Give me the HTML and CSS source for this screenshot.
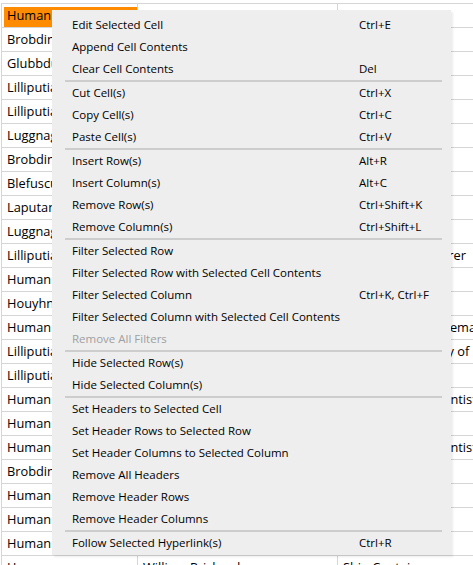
FILE: index.html
```html
<!DOCTYPE html>
<html lang="en">
<head>
<meta charset="utf-8">
<title>Grid context menu</title>
<link rel="stylesheet" href="styles.css">
</head>
<body>
<table class="grid">
<tr><td class="c1 sel">Human</td><td class="c2">Lemuel Gulliver</td><td class="c3">Ship's Surgeon</td></tr>
<tr><td>Brobdingnagian</td><td>Glumdalclitch</td><td>Nurse</td></tr>
<tr><td>Glubbdubdribian</td><td>The Governor</td><td>Sorcerer</td></tr>
<tr><td>Lilliputian</td><td>Golbasto Momarem</td><td>Emperor</td></tr>
<tr><td>Lilliputian</td><td>Skyresh Bolgolam</td><td>Admiral</td></tr>
<tr><td>Luggnaggian</td><td>The King</td><td>Monarch</td></tr>
<tr><td>Brobdingnagian</td><td>The Queen</td><td>Queen</td></tr>
<tr><td>Blefuscudian</td><td>The Emperor</td><td>Emperor</td></tr>
<tr><td>Laputan</td><td>Lord Munodi</td><td>Governor</td></tr>
<tr><td>Luggnaggian</td><td>Struldbrug</td><td>Immortal</td></tr>
<tr><td>Lilliputian</td><td>Flimnap</td><td>Lord Chief Treasurer</td></tr>
<tr><td>Human</td><td>Mary Burton</td><td>Wife</td></tr>
<tr><td>Houyhnhnm</td><td>The Master</td><td>Horse</td></tr>
<tr><td>Human</td><td>Mr. Bates</td><td>Professor of Mathematics</td></tr>
<tr><td>Lilliputian</td><td>Reldresal</td><td>Principal Secretary of Private Affairs</td></tr>
<tr><td>Lilliputian</td><td>Clefren Frelock</td><td>Officer</td></tr>
<tr><td>Human</td><td>The Projector</td><td>Top Academy Scientist</td></tr>
<tr><td>Human</td><td>Pedro de Mendez</td><td>Captain</td></tr>
<tr><td>Human</td><td>The Astronomer</td><td>Top Academy Scientist</td></tr>
<tr><td>Brobdingnagian</td><td>The Farmer</td><td>Farmer</td></tr>
<tr><td>Human</td><td>John Biddel</td><td>Captain</td></tr>
<tr><td>Human</td><td>Richard Sympson</td><td>Publisher</td></tr>
<tr><td>Human</td><td>James Bates</td><td>Surgeon</td></tr>
<tr><td>Human</td><td>William Prichard</td><td>Ship Captain</td></tr>
</table>

<div class="menu">
  <div class="item"><span>Edit Selected Cell</span><span>Ctrl+E</span></div>
  <div class="item"><span>Append Cell Contents</span><span></span></div>
  <div class="item"><span>Clear Cell Contents</span><span>Del</span></div>
  <div class="sep"></div>
  <div class="item"><span>Cut Cell(s)</span><span>Ctrl+X</span></div>
  <div class="item"><span>Copy Cell(s)</span><span>Ctrl+C</span></div>
  <div class="item"><span>Paste Cell(s)</span><span>Ctrl+V</span></div>
  <div class="sep"></div>
  <div class="item"><span>Insert Row(s)</span><span>Alt+R</span></div>
  <div class="item"><span>Insert Column(s)</span><span>Alt+C</span></div>
  <div class="item"><span>Remove Row(s)</span><span>Ctrl+Shift+K</span></div>
  <div class="item"><span>Remove Column(s)</span><span>Ctrl+Shift+L</span></div>
  <div class="sep"></div>
  <div class="item"><span>Filter Selected Row</span><span></span></div>
  <div class="item"><span>Filter Selected Row with Selected Cell Contents</span><span></span></div>
  <div class="item"><span>Filter Selected Column</span><span>Ctrl+K, Ctrl+F</span></div>
  <div class="item"><span>Filter Selected Column with Selected Cell Contents</span><span></span></div>
  <div class="item disabled"><span>Remove All Filters</span><span></span></div>
  <div class="sep"></div>
  <div class="item"><span>Hide Selected Row(s)</span><span></span></div>
  <div class="item"><span>Hide Selected Column(s)</span><span></span></div>
  <div class="sep"></div>
  <div class="item"><span>Set Headers to Selected Cell</span><span></span></div>
  <div class="item"><span>Set Header Rows to Selected Row</span><span></span></div>
  <div class="item"><span>Set Header Columns to Selected Column</span><span></span></div>
  <div class="item"><span>Remove All Headers</span><span></span></div>
  <div class="item"><span>Remove Header Rows</span><span></span></div>
  <div class="item"><span>Remove Header Columns</span><span></span></div>
  <div class="sep"></div>
  <div class="item"><span>Follow Selected Hyperlink(s)</span><span>Ctrl+R</span></div>
</div>
</body>
</html>
```

FILE: styles.css
```css
html, body {
  margin: 0;
  padding: 0;
  height: 100%;
  overflow: hidden;
  background: #ffffff;
}

body {
  position: relative;
  font-family: "Segoe UI", "Open Sans", "Noto Sans", sans-serif;
  color: #000000;
}

.grid {
  border-collapse: separate;
  border-spacing: 0;
  table-layout: fixed;
  width: 637px;
  margin: 3px 0 0 1px;
  border-top: 1px solid #d6d6d6;
  border-left: 1px solid #d6d6d6;
  font-size: 12.8px;
}

.grid td {
  box-sizing: border-box;
  height: 24px;
  padding: 0 5px;
  line-height: 23px;
  border-right: 1px solid #d6d6d6;
  border-bottom: 1px solid #d6d6d6;
  white-space: nowrap;
  overflow: hidden;
}

.grid td.c1 { width: 136px; }
.grid td.c2 { width: 200px; }
.grid td.c3 { width: 300px; }

.grid td.sel {
  background-image: linear-gradient(#ff8c00, #ff8c00);
  background-repeat: no-repeat;
  background-origin: border-box;
  background-size: calc(100% - 2px) calc(100% - 3px);
  background-position: right bottom;
}

.menu {
  position: absolute;
  left: 52px;
  top: 10px;
  width: 399px;
  padding: 4px 0 1px;
  background: #eeeeee;
  box-shadow: 2px 2px 2px rgba(0, 0, 0, 0.08);
  font-size: 11.5px;
}

.item {
  display: grid;
  grid-template-columns: 287px 1fr;
  height: 22px;
  line-height: 22px;
  padding-left: 20px;
  white-space: nowrap;
}

.item.disabled {
  color: #a0a0a0;
}

.sep {
  height: 2px;
  margin: 0 9px 0 13px;
  background: #cdcdcd;
}
```
